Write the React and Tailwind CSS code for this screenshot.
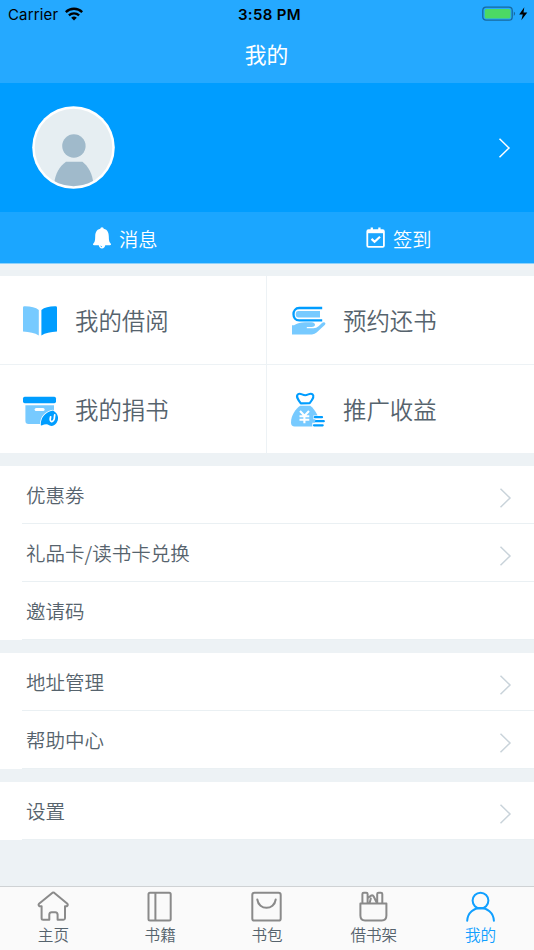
import React from "react";

const cjk = "font-['Noto_Sans_CJK_SC',sans-serif]";

function Chevron({ className }) {
  return (
    <svg width="14" height="22" viewBox="0 0 14 22" fill="none" stroke="currentColor" strokeWidth="1.5" className={className}>
      <path d="M1.5 1.8 L11 11 L1.5 20.2" />
    </svg>
  );
}

function StatusBar() {
  return (
    <div className="relative flex h-7 items-center justify-between pl-2 pr-[6px] font-[Inter,sans-serif] text-black">
      <div className="flex items-center gap-[7px]">
        <span className="text-[15px] font-normal leading-none tracking-[0.15px]">Carrier</span>
        <svg width="18" height="14" viewBox="0 0 18 14" fill="none" stroke="#000" strokeWidth="2.3">
          <path d="M.8 5.1 C5.3.6 12.7.6 17.2 5.1" />
          <path d="M3.9 8.4 C6.8 5.6 11.2 5.6 14.1 8.4" />
          <path d="M6.2 10.7 Q9 8.5 11.8 10.7 L9 13.5Z" fill="#000" stroke="none" />
        </svg>
      </div>
      <span className="absolute inset-x-0 pl-[5px] text-center text-[15px] font-semibold leading-none tracking-[0.35px]">3:58 PM</span>
      <svg width="46" height="16" viewBox="0 0 46 16">
        <rect x=".8" y="1.2" width="29.4" height="13" rx="3.2" fill="none" stroke="#17699f" strokeWidth="1.3" />
        <rect x="2.7" y="3" width="25.8" height="9.5" rx="1.6" fill="#4cd964" />
        <path d="M31.8 5.5 Q34.5 7.7 31.8 10Z" fill="#17699f" />
        <path d="M42.3 1.3 L37.2 8.6 L40.8 8.6 L39.3 14.3 L45.3 6.5 L41.5 6.5Z" fill="#000" />
      </svg>
    </div>
  );
}

function Avatar() {
  return (
    <svg width="83" height="83" viewBox="0 0 83 83">
      <defs>
        <clipPath id="face"><circle cx="41.5" cy="41.5" r="38.8" /></clipPath>
      </defs>
      <circle cx="41.5" cy="41.5" r="41.3" fill="#fff" />
      <g clipPath="url(#face)">
        <rect width="83" height="83" fill="#e6eef2" />
        <circle cx="41.9" cy="40" r="11.7" fill="#a0bacb" />
        <path d="M34 55.7 H50.4 C56.7 60.5 60.2 68 61.4 77 V83 H22.2 V77 C23.4 68 27.2 60.5 34 55.7Z" fill="#a0bacb" />
      </g>
    </svg>
  );
}

function Bell() {
  return (
    <svg width="20" height="22" viewBox="0 0 20 22" fill="#fff">
      <circle cx="10" cy="2" r="1.7" />
      <path d="M10 1.6 C14.8 1.6 16.8 5.2 16.8 9.5 C16.8 13.8 17.4 15.4 18.7 16.6 Q19.8 18.2 18 18.3 H2 Q.2 18.2 1.3 16.6 C2.6 15.4 3.2 13.8 3.2 9.5 C3.2 5.2 5.2 1.6 10 1.6Z" />
      <path d="M6.7 18 Q7.3 21.4 10 21.4 Q12.7 21.4 13.3 18Z" />
      <path d="M8 18.6 L10.2 19.4 L9.5 20.2Z" fill="#1ba6ff" />
    </svg>
  );
}

function CalendarTick() {
  return (
    <svg width="20" height="22" viewBox="0 0 20 22" fill="none" stroke="#fff">
      <rect x="1.3" y="3.2" width="16.6" height="16.7" rx="1.2" strokeWidth="1.8" />
      <path d="M1.2 4.6 H18" strokeWidth="3.2" />
      <path d="M5.8 .4 V4 M13.4 .4 V4" strokeWidth="2.3" />
      <path d="M5.5 11.9 L8.6 14.8 L14 9.7" strokeWidth="2.2" />
    </svg>
  );
}

function OpenBook() {
  return (
    <svg width="36" height="36" viewBox="0 0 36 36">
      <path d="M1 4.5 Q1 3.2 2.4 3.2 C8.5 3.1 13.7 4.2 16.8 7 V32.5 C12.8 29.8 7.5 28.7 1 28.4Z" fill="#77caff" />
      <path d="M35 4.5 Q35 3.2 33.6 3.2 C27.5 3.1 22.5 4.2 19.4 7 V32.5 C23.2 29.8 28.5 28.7 35 28.4Z" fill="#009dff" />
    </svg>
  );
}

function BookHand() {
  return (
    <svg width="36" height="36" viewBox="0 0 36 36">
      <path d="M31.2 5 H8.2 C.6 5 .6 17.4 8.2 17.4 H31.2" fill="none" stroke="#009dff" strokeWidth="2.3" />
      <path d="M29 8 H7.4 Q4.8 8 4.8 11.2 Q4.8 14.5 7.4 14.5 H29Z" fill="#77caff" />
      <path d="M1 22.2 H3 C6 20.3 10 19.2 14 19.2 H20.5 C22.9 19.2 24.4 20.6 24 22.3 Q23.5 23.7 20.8 24 H15.8 V25.3 H22.4 Q25.5 25.2 27.5 23.2 L31 20 Q32 18.9 33.4 19.2 Q35.3 20.3 34 21.8 L25.6 29.5 Q23.8 31.3 21 31.4 H1Z" fill="#77caff" />
    </svg>
  );
}

function DonateBox() {
  return (
    <svg width="37" height="36" viewBox="0 0 37 36" className="-mr-px">
      <rect x="1" y="4.8" width="33" height="6.4" rx="1.7" fill="#009dff" />
      <path d="M3.4 13.2 H32 V32 H6.5 Q3.4 32 3.4 28.8Z" fill="#77caff" />
      <rect x="12.6" y="16" width="10" height="3.1" rx="1.5" fill="#fff" />
      <path d="M18 34 C17.5 26 22 19.3 31 17.8 C35.6 20 37.6 24 36.8 28 C35 34 31 35.6 27.5 34.6Z" fill="#fff" />
      <path d="M18.8 33.2 C18.5 26.2 22.8 20 31 18.5 C35 20.8 37 24.5 35.7 28.5 C33.7 33.8 30.3 34.8 27.1 33.2 Q24.8 31.4 19.6 33.4Z" fill="#009dff" />
      <path d="M28.6 24.8 C27.2 30.2 30.7 31.2 32.2 27 L32.7 22.8" fill="none" stroke="#fff" strokeWidth="1.7" strokeLinecap="round" />
    </svg>
  );
}

function MoneyBag() {
  return (
    <svg width="36" height="37" viewBox="0 0 36 37">
      <g transform="translate(0 1)">
        <path d="M9.8 10.4 C6.8 6.4 4.6 3.2 7 1.3 C9.2-.5 11.3 2.2 14.2 2.2 C17 2.2 19.2-.5 21.5 1.3 C23.8 3.2 21.8 6.4 18.7 10.2Z" fill="none" stroke="#009dff" strokeWidth="2.1" strokeLinejoin="round" />
        <path d="M9.2 12.8 H19.3 C25 17.2 28.6 25.4 27.7 30 Q27 33.4 23 33.4 H3.7 Q0 33.4 0 29.5 C0 22.4 4.5 16 9.2 12.8Z" fill="#77caff" />
        <path d="M9 18 L13.5 22.8 L18 18 M8.5 23.2 H18.3 M8.5 26.8 H18.3 M13.4 22 V30.2" fill="none" stroke="#fff" strokeWidth="2.1" />
        <path d="M22.4 22.4 H36 V26.2 H22.4Z M24.4 26 H36 V30 H24.4Z M21.3 29.8 H36 V36 H21.3Z" fill="#fff" />
        <path d="M23.8 24.2 H31 M25 28.2 H32.8 M23 32.3 H31.7" stroke="#009dff" strokeWidth="2.2" strokeLinecap="round" />
      </g>
    </svg>
  );
}

function Tile({ icon, label, className }) {
  return (
    <div className={`flex h-[88px] items-center bg-white pt-0.5 ${className}`}>
      {icon}
      <span className="text-[23.4px] leading-none text-[#56636d]">{label}</span>
    </div>
  );
}

function Row({ label, arrow = true }) {
  return (
    <div className="h-[58px] bg-white pl-[22px]">
      <div className="flex h-full items-center justify-between border-b-[1.5px] border-[#eaf0f3] pl-1 pr-[21px] pt-px">
        <span className="text-[19.5px] leading-none text-[#56636d]">{label}</span>
        {arrow && <Chevron className="mt-[5px] text-[#c9d3da]" />}
      </div>
    </div>
  );
}

function TabIcon({ children, color = "#8a8a8a" }) {
  return (
    <svg width="32" height="32" viewBox="0 0 32 32" fill="none" stroke={color} strokeWidth="2" strokeLinecap="round" strokeLinejoin="round">
      {children}
    </svg>
  );
}

const tabs = [
  {
    label: "主页",
    icon: (
      <TabIcon>
        <path d="M15.5 1.7 Q16.3 1.2 17.1 1.7 L30.4 12.8 Q31.4 14.2 29.6 15.3 H28 V27.2 Q27.9 28.7 26.4 28.7 H20.6 V23.5 Q20.3 21.3 18.2 21.3 H14.7 Q12.5 21.3 12.3 23.5 V28.7 H6.2 Q4.6 28.7 4.6 27.2 V15.3 H2.6 Q.9 14.2 2 12.8Z" />
      </TabIcon>
    ),
  },
  {
    label: "书籍",
    icon: (
      <TabIcon>
        <rect x="4.5" y="1.8" width="22.2" height="27.8" rx="1.5" />
        <path d="M11.4 2 V29" />
      </TabIcon>
    ),
  },
  {
    label: "书包",
    icon: (
      <TabIcon>
        <rect x="1.3" y="1.8" width="28.4" height="27.8" rx="2.2" />
        <path d="M6.3 8.5 C7.7 19.5 23.3 19.5 24.7 8.5" />
      </TabIcon>
    ),
  },
  {
    label: "借书架",
    icon: (
      <TabIcon>
        <path d="M2.4 12.6 H28.4 V24.5 Q28.4 29.4 23.8 29.4 H7 Q2.4 29.4 2.4 24.5Z" />
        <path d="M4.4 12 V3 Q4.4 1.8 5.8 1.8 H8.2 Q9.6 1.8 9.6 3 V12 M19.2 6 V3 Q19.2 1.8 20.6 1.8 H22.9 Q24.3 1.8 24.3 3 V12 M10.2 6.6 L13.5 4.4 Q15 4 15.7 5.5 L18.9 12 M11.6 12 L12.8 7.5 M19.2 4.8 V12" />
      </TabIcon>
    ),
  },
  {
    label: "我的",
    active: true,
    icon: (
      <TabIcon color="#109fff">
        <circle cx="15.5" cy="9.6" r="7.9" />
        <path d="M2.2 29.8 C3.1 12.8 28 12.8 28.9 29.8" />
      </TabIcon>
    ),
  },
];

export default function App() {
  return (
    <div className={`flex h-[950px] w-[534px] flex-col overflow-hidden bg-[#edf2f5] font-[350] ${cjk}`}>
      <header className="h-[83px] shrink-0 bg-[#25a9ff]">
        <StatusBar />
        <h1 className="pr-px pt-[14px] text-center text-[21.8px] font-normal leading-[24px] text-white">我的</h1>
      </header>

      <section className="flex h-[129px] shrink-0 items-center justify-between bg-[#009dff] pl-8 pr-[22px]">
        <Avatar />
        <Chevron className="text-white" />
      </section>

      <section className="grid h-[52px] shrink-0 grid-cols-2 border-b border-[#8fd2fb] bg-[#1ba6ff] text-[19.3px] leading-none text-white">
        <div className="flex items-center gap-[7px] pl-[92px]">
          <Bell />
          <span className="pt-1">消息</span>
        </div>
        <div className="flex items-center gap-[7px] pl-[99px]">
          <CalendarTick />
          <span className="pt-1">签到</span>
        </div>
      </section>

      <section className="mt-3 grid shrink-0 grid-cols-[266px_267px] gap-px">
        <Tile className="gap-[17px] pl-[22px]" icon={<OpenBook />} label="我的借阅" />
        <Tile className="gap-4 pl-[24px]" icon={<BookHand />} label="预约还书" />
        <Tile className="gap-[17px] pl-[22px]" icon={<DonateBox />} label="我的捐书" />
        <Tile className="gap-4 pl-[24px]" icon={<MoneyBag />} label="推广收益" />
      </section>

      <section className="mt-[13px] shrink-0">
        <Row label="优惠劵" />
        <Row label="礼品卡/读书卡兑换" />
        <Row label="邀请码" arrow={false} />
      </section>
      <section className="mt-[13px] shrink-0">
        <Row label="地址管理" />
        <Row label="帮助中心" />
      </section>
      <section className="mt-[13px] shrink-0">
        <Row label="设置" />
      </section>

      <nav className="mt-auto grid h-16 shrink-0 grid-cols-5 border-t border-[#cfd2d4] bg-[#fafafa]">
        {tabs.map((tab) => (
          <div key={tab.label} className={`flex flex-col items-center gap-[3px] pt-1 ${tab.active ? "text-[#109fff]" : "text-[#56636d]"}`}>
            {tab.icon}
            <span className="text-[15.6px] leading-[16px]">{tab.label}</span>
          </div>
        ))}
      </nav>
    </div>
  );
}
